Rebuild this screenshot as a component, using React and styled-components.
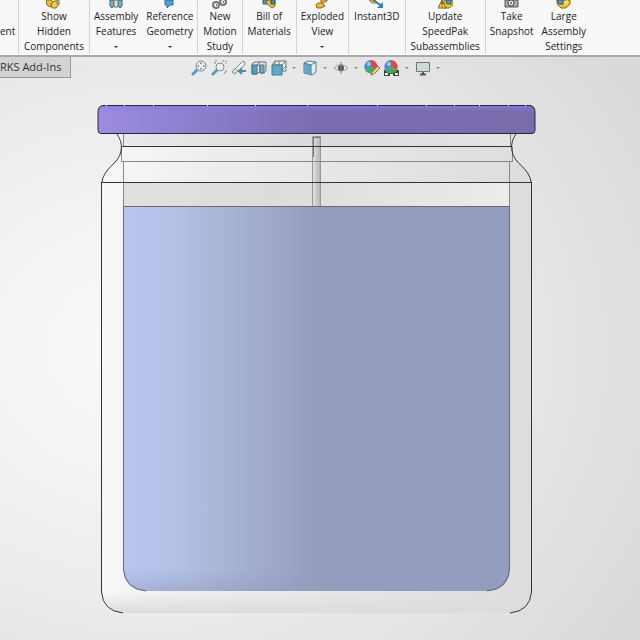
import React from 'react'
import styled, { createGlobalStyle } from 'styled-components'

const GlobalStyle = createGlobalStyle`
  body {
    margin: 0;
    font-family: "Open Sans", "Noto Sans", sans-serif;
    color: #333;
  }
  button {
    font: inherit;
    color: inherit;
    background: none;
    border: 0;
    padding: 0;
  }
`

const ribbonIcons = {
  none: null,
  show: (
    <>
      <path d="M0 0h5l2 2-3 5-3-2z" fill="#efbd2d" stroke="#8b6816" />
      <path d="M5 4l3-3h4l1 3-3 4H6z" fill="#f4ca4a" stroke="#8b6816" />
      <path d="M11 0h2v4h-2z" fill="#c9c9c9" stroke="#777" />
    </>
  ),
  assembly: (
    <>
      <path d="M1 0h4v6l-2 2-2-2zM9 0h4v6l-2 2-2-2z" fill="#6fb2d2" stroke="#3e6577" />
      <path d="M5 0h4v7H5z" fill="#ddd" stroke="#777" />
    </>
  ),
  reference: <path d="M3 0h8v5H8L5 8V5H3z" fill="#4aa5d6" stroke="#2c7196" />,
  motion: (
    <g fill="#eee" stroke="#777" strokeWidth="2">
      <circle cx="4" cy="5" r="3" />
      <circle cx="11" cy="2" r="3" />
      <path d="M4 5h1M11 2h1" />
    </g>
  ),
  bill: (
    <>
      <path d="M1 0h6v4H1z" fill="#4f9dbd" stroke="#356" />
      <path d="M4 3l2-3h4l3 1v5l-3 2z" fill="#efbd2d" stroke="#8b6816" />
      <path d="M9 0h4v4H9z" fill="#3b91b9" stroke="#356" />
    </>
  ),
  exploded: (
    <>
      <path d="M1 5l2-2h4l3 3-4 2H2z" fill="#efbd2d" stroke="#8b6816" />
      <path d="M6 0h6v1L8 3 6 2z" fill="#f4ca4a" stroke="#8b6816" />
    </>
  ),
  instant: (
    <>
      <path d="M0 0h6l2 3H3z" fill="#efbd2d" stroke="#a9821f" />
      <path d="M4 0l9 6" fill="none" stroke="#2b86b8" strokeWidth="2" />
      <path d="M14 2v6H8z" fill="#2b86b8" />
    </>
  ),
  update: (
    <>
      <path d="M6 0h9v5l-4 3H6z" fill="#f1c73c" stroke="#8b6816" />
      <path d="M8 0h5v4H9z" fill="#4f9dbd" stroke="#356" />
      <path d="M4 0l4 8H0z" fill="#ffd735" stroke="#7a6012" />
      <path d="M4 2v3M4 6v1" stroke="#222" />
    </>
  ),
  snapshot: (
    <>
      <path d="M1 0h13v7H1z" fill="#aaa" stroke="#555" />
      <circle cx="7" cy="3" r="3" fill="#eee" stroke="#444" />
      <circle cx="7" cy="3" r="1" fill="#555" />
    </>
  ),
  large: (
    <>
      <path d="M1 0h13v4l-4 4H5L1 4z" fill="#efbd2d" stroke="#8b6816" />
      <path d="M1 0h6v4H3z" fill="#4f9dbd" stroke="#356" />
      <path d="M8 2l4-2v3L9 5z" fill="#fae08a" />
    </>
  ),
}

const groups = [
  [{ lines: ['', 'ent'], icon: 'none' }],
  [{ lines: ['Show', 'Hidden', 'Components'], icon: 'show' }],
  [
    { lines: ['Assembly', 'Features'], icon: 'assembly', menu: true },
    { lines: ['Reference', 'Geometry'], icon: 'reference', menu: true },
  ],
  [{ lines: ['New', 'Motion', 'Study'], icon: 'motion' }],
  [{ lines: ['Bill of', 'Materials'], icon: 'bill' }],
  [{ lines: ['Exploded', 'View'], icon: 'exploded', menu: true }],
  [{ lines: ['Instant3D'], icon: 'instant' }],
  [{ lines: ['Update', 'SpeedPak', 'Subassemblies'], icon: 'update' }],
  [
    { lines: ['Take', 'Snapshot'], icon: 'snapshot' },
    { lines: ['Large', 'Assembly', 'Settings'], icon: 'large' },
  ],
]

const Ball = () => (
  <>
    <path d="M7 7V0a7 7 0 0 0-6 10z" fill="#3f8fdb" />
    <path d="M7 7V0a7 7 0 0 1 6 10z" fill="#e04848" />
    <path d="M7 7l6 3a7 7 0 0 1-12 0z" fill="#3fae5a" />
    <circle cx="5" cy="4" r="2" fill="#fff" opacity=".5" />
  </>
)

const viewTools = [
  {
    name: 'zoomFit',
    icon: (
      <>
        <path d="M2 14l4-4" stroke="#5b9cbc" strokeWidth="3" strokeLinecap="round" />
        <circle cx="10" cy="6" r="5" fill="#e9eff2" stroke="#76858d" />
        <path d="M10 2l1 2H9zM10 10l1-2H9zM6 6l2-1v2zM14 6l-2-1v2z" fill="#5d6f79" />
      </>
    ),
  },
  {
    name: 'zoomArea',
    icon: (
      <>
        <path d="M2 14l4-4" stroke="#5b9cbc" strokeWidth="3" strokeLinecap="round" />
        <circle cx="9" cy="7" r="4" fill="#e9eff2" stroke="#7e8c94" />
        <path d="M4 4V1h3M11 1h4v3M15 10v3h-3" fill="none" stroke="#888" strokeDasharray="2 1" />
      </>
    ),
  },
  {
    name: 'previousView',
    icon: (
      <>
        <path d="M4 9l6-6 3-2 1 3-4 5-3 3z" fill="#f1f1f1" stroke="#858b8e" />
        <path d="M1 12l3-4 3 3-3 3z" fill="#ddd" stroke="#858b8e" />
        <path d="M15 11H8m3-3l-3 3 3 3" fill="none" stroke="#3f8fb5" strokeWidth="2" />
      </>
    ),
  },
  {
    name: 'section',
    icon: (
      <>
        <path d="M1 4l3-2h5v9l-3 3H1z" fill="#e4eaec" stroke="#587581" />
        <path d="M1 5h5v9H1z" fill="#4f9fc2" stroke="#3f7188" />
        <path d="M6 5l3-3h6v9l-2 2H9V5z" fill="#dfe5e7" stroke="#587581" />
        <path d="M9 5h4v8H9z" fill="#7fa6b6" stroke="#587581" />
      </>
    ),
  },
  {
    name: 'orientation',
    menu: true,
    icon: (
      <>
        <path d="M4 1h11v10h-4V5H4z" fill="#eef1f2" stroke="#65737a" />
        <path d="M1 5h10v10H1z" fill="#5fa9c9" stroke="#3f7a93" />
        <path d="M1 5l3-4M11 5l4-4M8 1v4M11 10l4-4" fill="none" stroke="#65737a" />
      </>
    ),
  },
  {
    name: 'displayStyle',
    menu: true,
    icon: (
      <>
        <path d="M2 3l4-2 8 1v10l-4 3-8-2z" fill="#e6edf0" stroke="#557887" />
        <path d="M2 3l7 2v10l-7-2z" fill="#5fa9c9" />
        <path d="M2 3l7 2 5-3M9 5v10" fill="none" stroke="#557887" />
      </>
    ),
  },
  {
    name: 'hideItems',
    menu: true,
    icon: (
      <>
        <path d="M1 8q7-7 14 0-7 6-14 0z" fill="#e5e5e5" stroke="#999" />
        <circle cx="8" cy="8" r="3" fill="#555" />
        <path d="M8 2v12" stroke="#888" />
      </>
    ),
  },
  {
    name: 'appearance',
    icon: (
      <>
        <Ball />
        <path d="M7 15l1-3 6-6 2 2-6 6z" fill="#f0cf8e" stroke="#8c704b" />
      </>
    ),
  },
  {
    name: 'scene',
    menu: true,
    icon: (
      <>
        <path d="M0 10h15v6H0z" fill="#444" />
        <path d="M1 13h3v2H1zM6 14h3v2H6zM11 13h3v2h-3z" fill="#eee" />
        <Ball />
      </>
    ),
  },
  {
    name: 'viewSettings',
    menu: true,
    icon: (
      <>
        <path d="M1.500 2.500h13v9h-13z" fill="#d0d8da" stroke="#6f7679" />
        <path d="M8 12v2M5 14.500h6" stroke="#555" strokeWidth="2" />
      </>
    ),
  },
]

const Jar = () => (
  <Drawing viewBox="0 80 640 560">
    <defs>
      <linearGradient id="lid">
        <stop offset="0" stopColor="#9d8ce1" />
        <stop offset=".25" stopColor="#8b7ccb" />
        <stop offset=".5" stopColor="#7b6bae" />
        <stop offset="1" stopColor="#7a6bad" />
      </linearGradient>
      <linearGradient id="lidTop" x1="0" y1="0" x2="0" y2="1">
        <stop offset="0" stopColor="#8e7be4" stopOpacity=".7" />
        <stop offset="1" stopColor="#8e7be4" stopOpacity="0" />
      </linearGradient>
      <linearGradient id="wax">
        <stop offset="0" stopColor="#b9c6ed" />
        <stop offset=".14" stopColor="#b3c0e6" />
        <stop offset=".3" stopColor="#a6b0d2" />
        <stop offset=".5" stopColor="#959dbc" />
        <stop offset="1" stopColor="#959dbe" />
      </linearGradient>
      <linearGradient id="waxBase" x1="0" y1="0" x2="0" y2="1">
        <stop offset="0" stopColor="#949cbe" stopOpacity="0" />
        <stop offset="1" stopColor="#949cbe" stopOpacity=".5" />
      </linearGradient>
      <linearGradient id="glass">
        <stop offset="0" stopColor="#f7f7f7" />
        <stop offset=".25" stopColor="#eeeeee" />
        <stop offset=".6" stopColor="#e5e5e5" />
        <stop offset="1" stopColor="#dddddd" />
      </linearGradient>
      <linearGradient id="glassBase" x1="0" y1="0" x2="0" y2="1">
        <stop offset="0" stopColor="#dcdcdc" stopOpacity="0" />
        <stop offset="1" stopColor="#dcdcdc" />
      </linearGradient>
      <linearGradient id="rim">
        <stop offset="0" stopColor="#e9e9e9" />
        <stop offset=".5" stopColor="#dadada" />
        <stop offset="1" stopColor="#e4e4e4" />
      </linearGradient>
      <linearGradient id="neck">
        <stop offset="0" stopColor="#e0e0df" />
        <stop offset=".4" stopColor="#dcdcdb" />
        <stop offset="1" stopColor="#ececea" />
      </linearGradient>
      <linearGradient id="wick">
        <stop offset="0" stopColor="#e8e8e8" />
        <stop offset="1" stopColor="#b6b6b6" />
      </linearGradient>
    </defs>

    <path
      d="M117 134C121 140 122 145 121 151C119 164 104 167 101 183V592Q103 611 123 613H510Q530 611 532 592V183C529 167 514 164 512 151C511 145 512 140 516 134Z"
      fill="url(#glass)"
    />
    <path d="M124 134H510V146H124z" fill="url(#rim)" />
    <path d="M124 183H510V206H124z" fill="url(#neck)" />
    <path d="M103 592H530Q527 611 510 613H123Q106 611 103 592z" fill="url(#glassBase)" />

    <path d="M123 206H510V569Q509 589 488 591H145Q124 589 123 569Z" fill="url(#wax)" />
    <path d="M123 569H510Q509 589 488 591H145Q124 589 123 569Z" fill="url(#waxBase)" />
    <path d="M123.500 569V206.500H509.500V569" fill="none" stroke="#666b78" />
    <path d="M123.500 569Q125 589 146 591M509.500 569Q508 589 487 591" fill="none" stroke="#626777" />

    <rect x="312" y="137" width="8" height="69" fill="url(#wick)" />
    <path d="M312.500 206V136.500H320.500V206" fill="none" stroke="#999" />
    <path d="M313.500 157V137.500H320" fill="none" stroke="#777" />

    <g fill="none" stroke="#888">
      <path d="M123.500 134V146M121.500 147V161M123.500 161V206" />
      <path d="M510.500 134V146M512.500 147V161M509.500 161V206" />
      <path d="M121 161.500H513" />
    </g>
    <g fill="none" stroke="#333">
      <path d="M122 146.500H512M101 182.500H532" />
      <path d="M117 134C121 140 122 145 121 151C119 164 104 167 101.500 183V592Q103 611 123 613" />
      <path d="M516 134C512 140 511 145 512 151C514 164 529 167 531.500 183V592Q530 611 510 613" />
    </g>

    <path
      d="M104 105H529Q535 105 535 112V130Q535 133.500 532 133.500H101Q98 133.500 98 130V112Q98 105 104 105Z"
      fill="url(#lid)"
    />
    <path d="M104 106H529L534 112H99Z" fill="url(#lidTop)" />
    <path
      d="M104 105.500H529Q535 105.500 535 112V130Q535 133.500 532 133.500H101Q98 133.500 98 130V112Q98 105.500 104 105.500Z"
      fill="none"
      stroke="#2b263f"
    />
    <path
      d="M106 105.500h1M124 105.500h1M153 105.500h1M207 105.500h1M255 105.500h1M307 105.500h1M377 105.500h1M426 105.500h1M454 105.500h1M479 105.500h1M508 105.500h1M525 105.500h1"
      stroke="#d5d0ea"
    />
  </Drawing>
)

const App = () => (
  <Page>
    <GlobalStyle />
    <Ribbon>
      {groups.map((group, i) =>
        <Group key={i}>
          {group.map(({ lines, icon, menu }) =>
            <Command key={icon} $cut={icon === 'none'} $tight={menu || group.length > 1}>
              <CommandIcon viewBox="0 0 15 9">{ribbonIcons[icon]}</CommandIcon>
              {lines.map((line, n) => <Line key={n}>{line}</Line>)}
              {menu && <Line><Caret $dark /></Line>}
            </Command>
          )}
        </Group>
      )}
    </Ribbon>
    <Viewport>
      <ViewBar>
        <Tab>RKS Add-Ins</Tab>
        <Tools>
          {viewTools.map(({ name, icon, menu }) =>
            <React.Fragment key={name}>
              <Tool>
                <ToolIcon viewBox="0 0 16 16">{icon}</ToolIcon>
              </Tool>
              {menu && <Tool><Caret /></Tool>}
            </React.Fragment>
          )}
        </Tools>
      </ViewBar>
      <Jar />
    </Viewport>
  </Page>
)

const Page = styled.div`
  min-height: 100vh;
  display: flex;
  flex-direction: column;
`
const Ribbon = styled.header`
  display: flex;
  overflow: hidden;
  background: #f8f8f8;
  border-bottom: 2px solid #a9a9a9;
`
const Group = styled.div`
  display: flex;
  border-right: 1px solid #d2d2d2;
  margin-bottom: 1px;
  &:last-child {
    border-right: 0;
  }
`
const Command = styled.button`
  display: flex;
  flex-direction: column;
  align-items: ${props => props.$cut ? 'flex-start' : 'center'};
  width: ${props => props.$cut && '18px'};
  padding: 0 ${props => props.$cut ? '0' : props.$tight ? '4px' : '5px'};
  font-size: 10px;
  color: #222;
  white-space: nowrap;
`
const CommandIcon = styled.svg`
  width: 15px;
  height: 9px;
`
const Line = styled.span`
  display: flex;
  align-items: center;
  height: 15px;
  line-height: 15px;
`
const Caret = styled.i`
  width: 0;
  margin: 0 1px;
  border: 2px solid transparent;
  border-top-color: ${props => props.$dark ? '#333' : '#888'};
  border-bottom: 0;
`
const Viewport = styled.main`
  flex: 1;
  background: radial-gradient(ellipse 90% 85% at 22% 50%, #fafafa, #eeeeee 45%, #e1e1e1 80%, #dadada);
`
const ViewBar = styled.div`
  display: grid;
  grid-template-columns: 1fr auto 1fr;
  align-items: start;
  height: 23px;
  padding-right: 7px;
`
const Tab = styled.button`
  justify-self: start;
  height: 21px;
  padding-right: 9px;
  font-size: 11px;
  line-height: 20px;
  background: #d3d3d3;
  border: solid #999;
  border-width: 0 1px 1px 0;
`
const Tools = styled.div`
  display: flex;
  align-items: center;
  gap: 4px;
  padding-top: 3px;
`
const Tool = styled.button`
  display: flex;
  align-items: center;
  min-width: 7px;
`
const ToolIcon = styled.svg`
  width: 16px;
  height: 16px;
`
const Drawing = styled.svg`
  display: block;
  width: 100%;
`

export default App
